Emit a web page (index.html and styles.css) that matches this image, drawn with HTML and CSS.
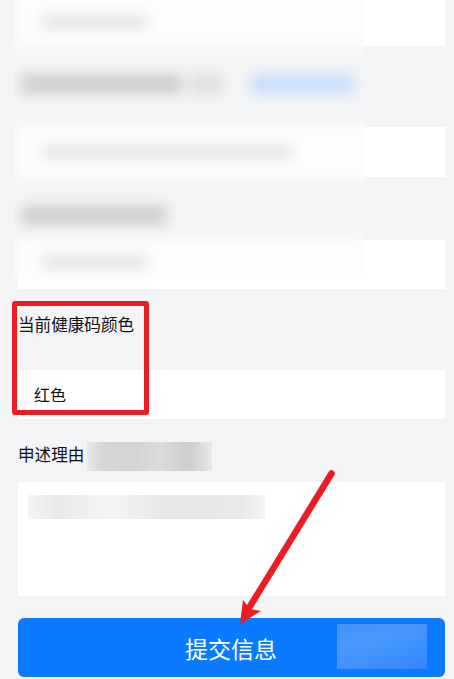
FILE: index.html
```html
<!DOCTYPE html>
<html lang="zh-CN">
<head>
<meta charset="utf-8">
<title>提交信息</title>
<link rel="stylesheet" href="styles.css">
</head>
<body>
<main class="form">
  <div class="field first"><span class="bar gray-light w110"></span></div>
  <div class="label tall">
    <span class="bar gray w163"></span><span class="bar gray-faint w36"></span><span class="bar blue w100"></span>
  </div>
  <div class="field second"><span class="bar gray-light w250"></span></div>
  <div class="label short"><span class="bar gray w146"></span></div>
  <div class="field third"><span class="bar gray-light w106"></span></div>
  <div class="label tall"><span class="label-text">当前健康码颜色</span></div>
  <div class="field fourth"><span class="value">红色</span></div>
  <div class="label short"><span class="label-text">申述理由</span><span class="mask mask-label"></span></div>
  <div class="field area"><span class="mask mask-area"></span></div>
  <button class="submit" type="button">提交信息<span class="mask mask-button"></span></button>
</main>
<div class="blur-panel"></div>
<div class="red-box"></div>
<svg class="arrow" width="454" height="679" viewBox="0 0 454 679" aria-hidden="true">
  <path d="M331.500 473.500 L249 608" class="arrow-line"/>
  <path d="M240 624 L243 600 L250 609 L261 611 Z" class="arrow-head"/>
</svg>
</body>
</html>
```

FILE: styles.css
```css
* { box-sizing: border-box; }
html, body { margin: 0; height: 679px; overflow: hidden; }
body {
  position: relative;
  background: #f3f4f6;
  font-family: "Liberation Sans", "Noto Sans CJK SC", sans-serif;
  color: #111;
}
.form { display: flex; flex-direction: column; padding: 0 9px 0 18px; }
.field { background: #fff; display: flex; align-items: center; }
.first { height: 46px; padding: 0 0 2px 24px; }
.second { height: 50px; padding-left: 24px; }
.third { height: 49px; padding: 0 0 6px 24px; }
.fourth { height: 49px; padding: 2px 0 0 16px; }
.area { height: 114px; align-items: flex-start; padding: 13px 0 0 10px; }
.label { display: flex; align-items: flex-start; padding-top: 26px; }
.tall { height: 81px; }
.short { height: 63px; }
.label-text { font-size: 16.600px; line-height: 22px; white-space: nowrap; }
.value { font-size: 16px; line-height: 20px; }
.bar { display: block; height: 14px; border-radius: 3px; flex: none; filter: blur(3px); }
.label .bar { margin-top: 2px; height: 20px; }
.gray { background: #bcbdc0; margin-left: 3px; }
.gray-light { background: #dcdcdc; }
.gray-faint { background: #d2d3d6; margin-left: 7px; }
.blue { background: #b0d2f9; margin-left: 27px; }
.w110 { width: 106px; }
.w163 { width: 161px; }
.w36 { width: 34px; }
.w100 { width: 104px; }
.w250 { width: 250px; }
.w146 { width: 146px; }
.w106 { width: 106px; }
.mask { display: block; flex: none; }
.mask-label {
  width: 125px; height: 29px; margin: -3px 0 0 3px;
  background: linear-gradient(90deg, #e9e9e9, #d6d6d6 12%, #d4d4d4 40%, #dcdcdc 58%, #cdcdcd 82%, #e9e9e9);
}
.mask-area {
  width: 237px; height: 24px;
  background: linear-gradient(90deg, #f4f4f4, #e9e9e9 12%, #f4f4f4 35%, #e6e6e6 60%, #e9e9e9 90%, #f5f5f5);
}
.submit {
  position: relative;
  height: 59px;
  margin-top: 22px;
  border: 0;
  border-radius: 6px;
  background: #0a7bff;
  color: #fff;
  font: inherit;
  font-size: 23px;
  padding: 0;
  text-indent: -1px;
}
.mask-button {
  position: absolute; left: 319px; top: 6px;
  width: 90px; height: 45px;
  background: linear-gradient(160deg, #3f93fb, #4a98fc 35%, #3187fb);
}
.blur-panel {
  position: absolute; left: 14px; top: 0;
  width: 351px; height: 279px;
  background: rgba(247, 247, 248, .3);
  -webkit-backdrop-filter: blur(6px);
  backdrop-filter: blur(6px);
}
.red-box {
  position: absolute; left: 12px; top: 301px;
  width: 137px; height: 114px;
  border: 5px solid #ec1c24;
  border-radius: 3px;
}
.arrow { position: absolute; left: 0; top: 0; pointer-events: none; }
.arrow-line { fill: none; stroke: #ec1c24; stroke-width: 6.500; stroke-linecap: round; }
.arrow-head { fill: #ec1c24; }
```
